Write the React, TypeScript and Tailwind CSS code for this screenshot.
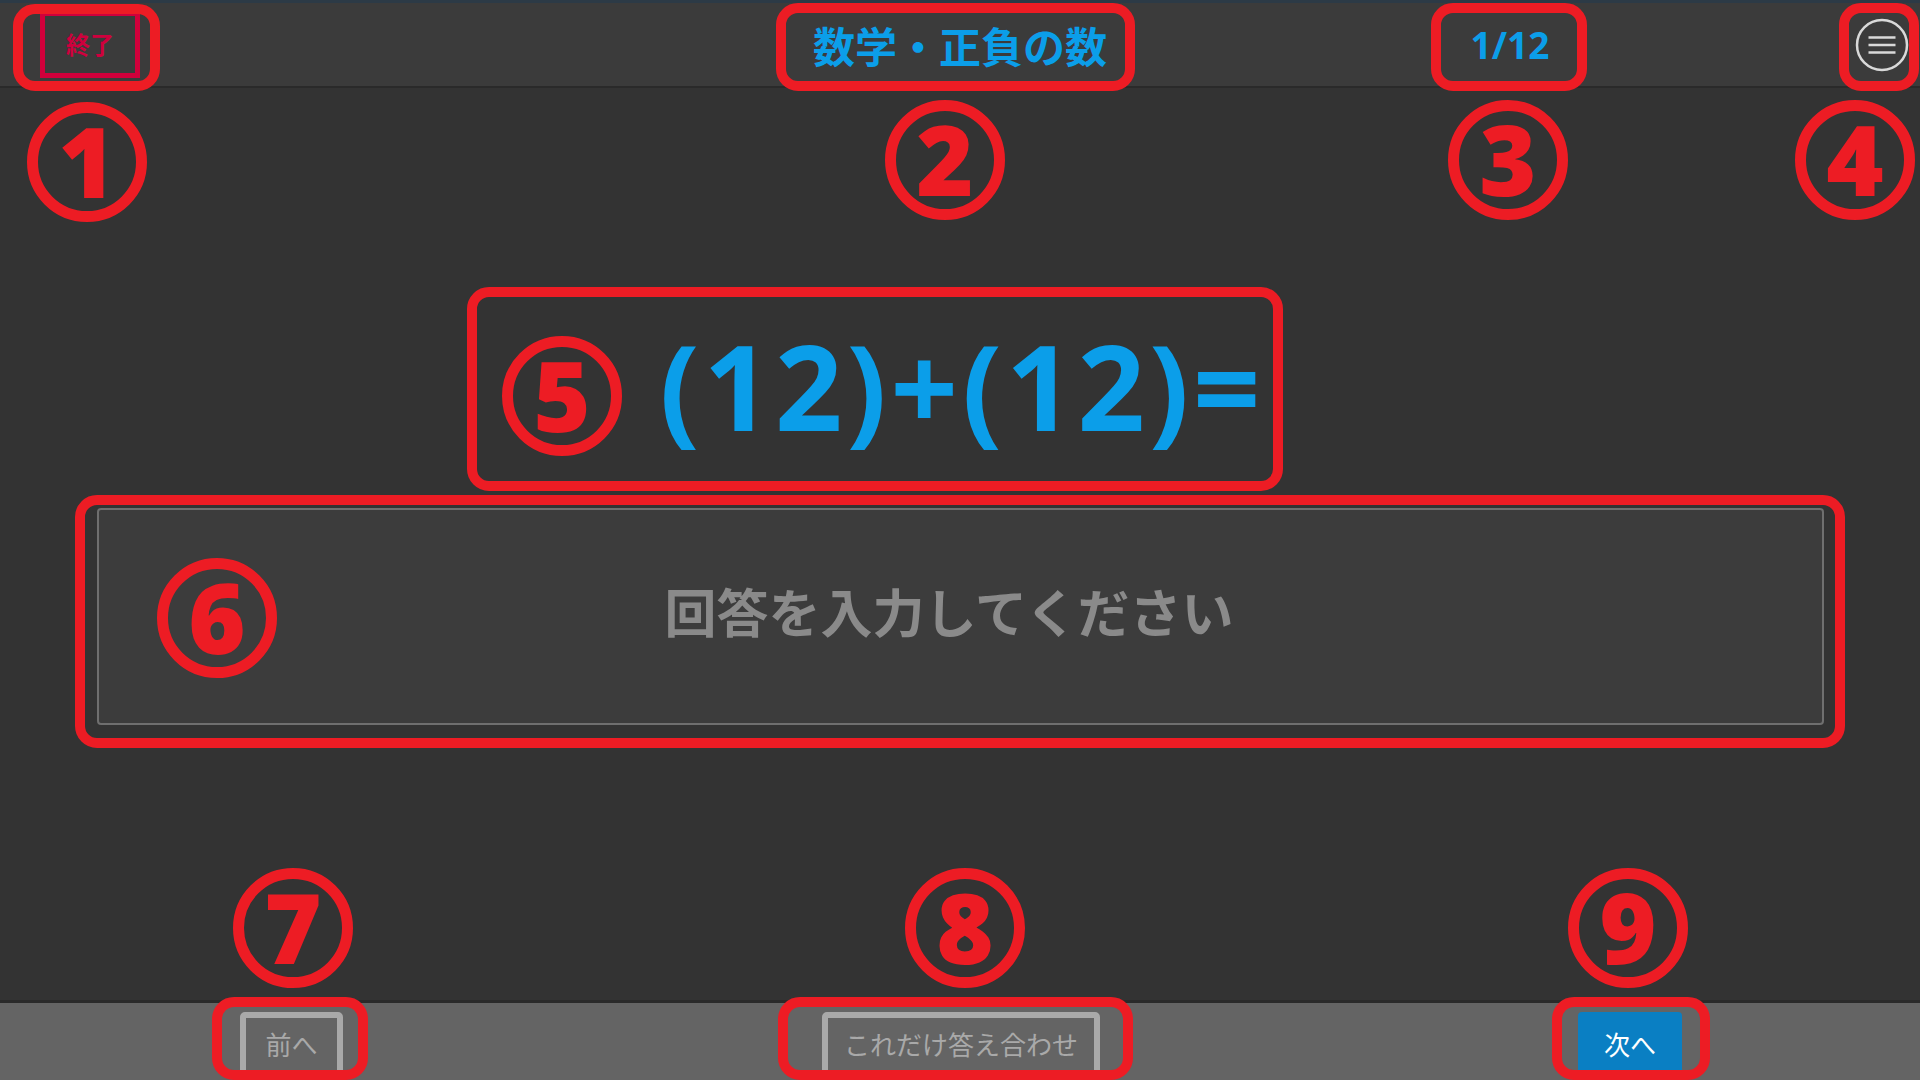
import React from "react";

const RED = "border-[#ed1c24]";

// annotation boxes laid over the app (red rounded frames)
const frames = [
  "left-[13px] top-[4px] w-[147px] h-[87px]",
  "left-[776px] top-[3px] w-[359px] h-[88px]",
  "left-[1431px] top-[3px] w-[156px] h-[88px]",
  "left-[1839px] top-[3px] w-[80px] h-[88px]",
  "left-[467px] top-[287px] w-[816px] h-[204px]",
  "left-[75px] top-[495px] w-[1770px] h-[253px]",
  "left-[212px] top-[997px] w-[156px] h-[83px]",
  "left-[778px] top-[997px] w-[355px] h-[83px]",
  "left-[1552px] top-[997px] w-[158px] h-[83px]",
];

// circled numbers
const marks = [
  { n: "1", cls: "left-[27px] top-[102px]" },
  { n: "2", cls: "left-[885px] top-[100px]" },
  { n: "3", cls: "left-[1448px] top-[100px]" },
  { n: "4", cls: "left-[1795px] top-[100px]" },
  { n: "5", cls: "left-[502px] top-[336px]" },
  { n: "6", cls: "left-[157px] top-[558px]" },
  { n: "7", cls: "left-[233px] top-[868px]" },
  { n: "8", cls: "left-[905px] top-[868px]" },
  { n: "9", cls: "left-[1568px] top-[868px]" },
];

function MenuIcon() {
  return (
    <svg width="54" height="54" viewBox="0 0 54 54" fill="none">
      <circle cx="27" cy="27" r="25" stroke="#d9d9d9" strokeWidth="2.5" />
      <path d="M13.5 19.5h27M13.5 27h27M13.5 34.5h27" stroke="#d9d9d9" strokeWidth="2.5" />
    </svg>
  );
}

export default function App() {
  return (
    <div
      className="relative flex h-screen w-full flex-col overflow-hidden bg-[#333333]"
      style={{ fontFamily: '"Open Sans", "Noto Sans CJK JP", sans-serif' }}
    >
      {/* header */}
      <header className="grid h-[88px] shrink-0 grid-cols-[1fr_auto_1fr] items-center border-t-[3px] border-b-2 border-t-[#2c3a46] border-b-[#2a2a2a] bg-[#3b3b3b]">
        <div className="pl-[40px]">
          <button className="flex h-[67px] w-[100px] items-center justify-center border-[5px] border-[#d1003b] text-[24px] font-bold text-[#cf003d]">
            終了
          </button>
        </div>
        <h1 className="text-[42px] font-bold leading-none text-[#0b9ee9]" style={{ fontFamily: '"Noto Sans CJK JP", sans-serif' }}>
          数学・正負の数
        </h1>
        <div className="flex items-center">
          <div className="ml-[343px] w-[120px] text-center text-[37px] font-bold leading-none text-[#0b9ee9]">1/12</div>
          <div className="ml-[285px]">
            <MenuIcon />
          </div>
        </div>
      </header>

      {/* question + answer */}
      <main className="flex flex-1 flex-col items-center pt-[239px]">
        <div className="pl-[4px] text-[118px] font-bold leading-none tracking-[4px] text-[#0b9ee9]">(12)+(12)=</div>
        <input
          className="mt-[63px] h-[217px] w-[1727px] rounded-[4px] border-2 border-[#6f6f6f] bg-[#3c3c3c] pb-[12px] pr-[22px] text-center text-[52px] font-bold text-white outline-none placeholder:text-[#8a8a8a]"
          style={{ fontFamily: '"Noto Sans CJK JP", sans-serif' }}
          placeholder="回答を入力してください"
        />
      </main>

      {/* footer */}
      <footer className="flex h-[80px] shrink-0 items-start border-t-[3px] border-[#2a2a2a] bg-[#646464] pl-[240px] pt-[9px]" style={{ fontFamily: '"Noto Sans CJK JP", sans-serif' }}>
        <button className="flex h-[68px] w-[103px] items-center justify-center rounded-t-[5px] border-[6px] border-[#a9a9a9] pb-[5px] text-[26px] text-[#a9a9a9]">
          前へ
        </button>
        <button className="ml-[479px] flex h-[68px] w-[278px] items-center justify-center rounded-t-[5px] border-[6px] border-[#a9a9a9] pb-[5px] text-[26px] text-[#a9a9a9]">
          これだけ答え合わせ
        </button>
        <button className="ml-[478px] flex h-[68px] w-[104px] items-center justify-center rounded-t-[4px] bg-[#0a7fc3] pb-[5px] text-[26px] text-white">
          次へ
        </button>
      </footer>

      {/* annotation layer */}
      <div className="pointer-events-none absolute inset-0">
        {frames.map((f, i) => (
          <div key={i} className={`absolute rounded-[22px] border-[10px] ${RED} ${f}`} />
        ))}
        {marks.map((m) => (
          <div
            key={m.n}
            className={`absolute flex h-[120px] w-[120px] items-center justify-center rounded-full border-[11px] ${RED} text-[98px] font-extrabold leading-none text-[#ed1c24] ${m.cls}`}
          >
            <span className="-mt-[4px]">{m.n}</span>
          </div>
        ))}
      </div>
    </div>
  );
}
